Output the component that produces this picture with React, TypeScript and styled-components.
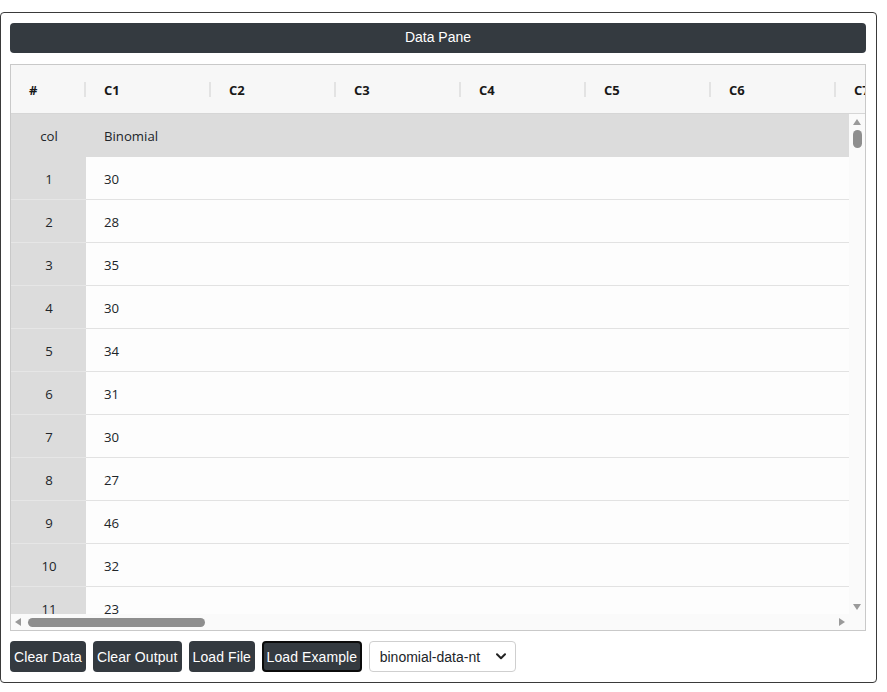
import React from "react";
import styled, { createGlobalStyle } from "styled-components";

const GlobalStyle = createGlobalStyle`
  html, body {
    margin: 0;
    padding: 0;
    background: #ffffff;
  }
  body {
    font-family: "Liberation Sans", Arial, sans-serif;
    color: #212529;
  }
  * { box-sizing: border-box; }
`;

const Card = styled.div`
  margin-top: 12px;
  width: 877px;
  height: 671px;
  border: 1px solid #3a3a3a;
  border-radius: 4px;
  padding: 10px 10px 10px 9px;
  display: flex;
  flex-direction: column;
  background: #fff;
`;

const TitleBar = styled.div`
  height: 30px;
  background: #343a40;
  border-radius: 4px;
  color: #fff;
  font-family: "Liberation Sans", Arial, sans-serif;
  font-size: 14px;
  display: flex;
  align-items: center;
  justify-content: center;
  padding-bottom: 2px;
`;

const Grid = styled.div`
  margin-top: 11px;
  height: 567px;
  border: 1px solid #c9c9c9;
  display: grid;
  grid-template-columns: 1fr 16px;
  grid-template-rows: 49px 500px 16px;
  background: #fcfcfc;
  font-family: "Open Sans", "Liberation Sans", sans-serif;
  font-size: 13.2px;
  color: #212529;
  overflow: hidden;
`;

const HeaderRow = styled.div`
  grid-column: 1 / 3;
  display: grid;
  grid-template-columns: 75px repeat(7, 125px);
  background: #f7f7f7;
  border-bottom: 1px solid #d6d6d6;
  overflow: hidden;
  white-space: nowrap;
`;

const HeaderCell = styled.div<{ $sep?: boolean }>`
  position: relative;
  display: flex;
  align-items: center;
  padding: 2px 0 0 18px;
  font-weight: 700;
  font-size: 13px;
  color: #181818;

  &::before {
    content: "";
    display: ${(p) => (p.$sep ? "block" : "none")};
    position: absolute;
    left: -2px;
    top: 17px;
    width: 2px;
    height: 15px;
    background: #e3e3e3;
  }
`;

const Body = styled.div`
  overflow: hidden;
  display: flex;
  flex-direction: column;
`;

const Row = styled.div<{ $label?: boolean }>`
  flex: 0 0 43px;
  display: grid;
  grid-template-columns: 75px 1fr;
  background: ${(p) => (p.$label ? "#dcdcdc" : "#fdfdfd")};
`;

const NumCell = styled.div<{ $label?: boolean }>`
  background: #dcdcdc;
  border-bottom: 1px solid ${(p) => (p.$label ? "#dcdcdc" : "#e6e6e6")};
  display: flex;
  align-items: center;
  justify-content: center;
  padding: 2px 0 0 1px;
`;

const ValueCell = styled.div<{ $label?: boolean }>`
  display: flex;
  align-items: center;
  padding: 2px 0 0 18px;
  border-bottom: 1px solid ${(p) => (p.$label ? "#dcdcdc" : "#e2e2e2")};
`;

const VTrack = styled.div`
  background: #fafafa;
  display: flex;
  flex-direction: column;
  align-items: center;
  justify-content: space-between;
  padding: 5px 0 4px;
`;

const HTrack = styled.div`
  background: #fafafa;
  display: flex;
  align-items: center;
  padding: 0 4px 0 4px;
`;

const Corner = styled.div`
  background: #fafafa;
`;

const VThumbArea = styled.div`
  flex: 1;
  width: 100%;
  display: flex;
  flex-direction: column;
  align-items: center;
  padding-top: 5px;
`;

const VThumb = styled.div`
  width: 9px;
  height: 18px;
  border-radius: 5px;
  background: #8e8e8e;
`;

const HThumbArea = styled.div`
  flex: 1;
  display: flex;
  align-items: center;
  padding-left: 7px;
`;

const HThumb = styled.div`
  width: 177px;
  height: 9px;
  border-radius: 5px;
  background: #8e8e8e;
`;

const Arrow = styled.svg`
  display: block;
  flex: 0 0 auto;
`;

const Toolbar = styled.div`
  margin-top: 10px;
  height: 31px;
  display: flex;
  gap: 7px;
  align-items: stretch;
`;

const Button = styled.button<{ $focused?: boolean }>`
  height: 31px;
  padding: 0 ${(p) => (p.$focused ? "2.5px" : "4px")};
  background: #343a40;
  color: #fff;
  border: ${(p) => (p.$focused ? "2px solid #0b0b0b" : "none")};
  border-radius: 4px;
  font-family: "Liberation Sans", Arial, sans-serif;
  font-size: 14px;
  letter-spacing: 0.1px;
  cursor: pointer;
  white-space: nowrap;
`;

const SelectWrap = styled.div`
  position: relative;
  width: 147px;
  height: 31px;
`;

const Select = styled.select`
  appearance: none;
  width: 100%;
  height: 100%;
  border: 1px solid #cfcfcf;
  border-radius: 4px;
  background: #fff;
  padding: 0 0 0 10px;
  font-family: "Liberation Sans", Arial, sans-serif;
  font-size: 14px;
  color: #212529;
`;

const Chevron = styled.svg`
  position: absolute;
  right: 10px;
  top: 12px;
  pointer-events: none;
`;

const values = [30, 28, 35, 30, 34, 31, 30, 27, 46, 32, 23, 29, 33];
const columns = ["C1", "C2", "C3", "C4", "C5", "C6", "C7"];

const Tri = ({ dir }: { dir: "up" | "down" | "left" | "right" }) => {
  const pts = {
    up: "0,6 4,0 8,6",
    down: "0,0 8,0 4,6",
    left: "6,0 6,8 0,4",
    right: "0,0 0,8 6,4",
  }[dir];
  const vertical = dir === "up" || dir === "down";
  return (
    <Arrow width={vertical ? 8 : 6} height={vertical ? 6 : 8} viewBox={vertical ? "0 0 8 6" : "0 0 6 8"}>
      <polygon points={pts} fill="#9a9a9a" />
    </Arrow>
  );
};

export default function App() {
  return (
    <>
      <GlobalStyle />
      <Card>
        <TitleBar>Data Pane</TitleBar>
        <Grid>
          <HeaderRow>
            <HeaderCell>#</HeaderCell>
            {columns.map((c) => (
              <HeaderCell key={c} $sep>
                {c}
              </HeaderCell>
            ))}
          </HeaderRow>
          <Body>
            <Row $label>
              <NumCell $label>col</NumCell>
              <ValueCell $label>Binomial</ValueCell>
            </Row>
            {values.map((v, i) => (
              <Row key={i}>
                <NumCell>{i + 1}</NumCell>
                <ValueCell>{v}</ValueCell>
              </Row>
            ))}
          </Body>
          <VTrack>
            <Tri dir="up" />
            <VThumbArea>
              <VThumb />
            </VThumbArea>
            <Tri dir="down" />
          </VTrack>
          <HTrack>
            <Tri dir="left" />
            <HThumbArea>
              <HThumb />
            </HThumbArea>
            <Tri dir="right" />
          </HTrack>
          <Corner />
        </Grid>
        <Toolbar>
          <Button>Clear Data</Button>
          <Button>Clear Output</Button>
          <Button>Load File</Button>
          <Button $focused>Load Example</Button>
          <SelectWrap>
            <Select defaultValue="binomial-data-nt">
              <option value="binomial-data-nt">binomial-data-nt</option>
              <option value="normal-data">normal-data</option>
            </Select>
            <Chevron width="10" height="7" viewBox="0 0 10 7">
              <path d="M1 1.2 L5 5.2 L9 1.2" fill="none" stroke="#222" strokeWidth="2" strokeLinecap="round" strokeLinejoin="round" />
            </Chevron>
          </SelectWrap>
        </Toolbar>
      </Card>
    </>
  );
}
